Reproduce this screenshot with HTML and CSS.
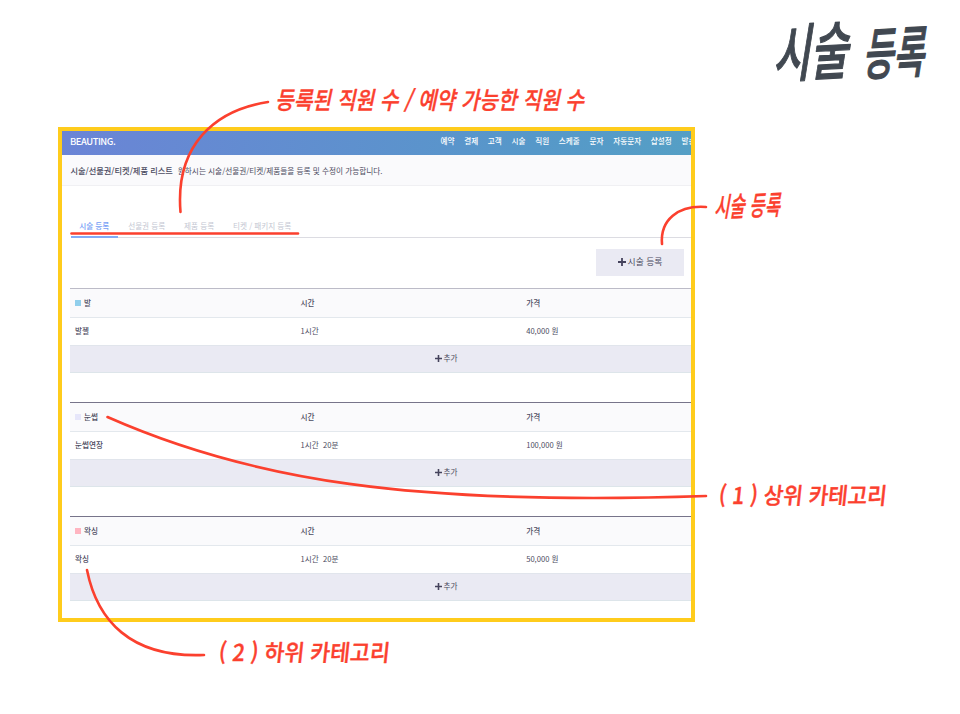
FILE: index.html
```html
<!DOCTYPE html>
<html lang="ko">
<head>
<meta charset="utf-8">
<title>시술 등록</title>
<link rel="stylesheet" href="styles.css">
</head>
<body>
<div class="page">
  <main class="frame">
    <header class="topbar">
      <strong class="brand">BEAUTING.</strong>
      <nav class="nav"><span>예약</span><span>결제</span><span>고객</span><span>시술</span><span>직원</span><span>스케줄</span><span>문자</span><span>자동문자</span><span>샵설정</span><span>발송</span></nav>
    </header>
    <div class="subhead"><h1>시술/선물권/티켓/제품 리스트</h1><p>원하시는 시술/선물권/티켓/제품들을 등록 및 수정이 가능합니다.</p></div>
    <div class="tabs"><span class="tab active">시술 등록</span><span class="tab">선물권 등록</span><span class="tab">제품 등록</span><span class="tab">티켓 / 패키지 등록</span></div>
    <div class="actions"><button class="register"><svg class="plus" viewBox="0 0 8 8"><path d="M4 0v8M0 4h8"/></svg>시술 등록</button></div>

    <section class="group first">
      <div class="row head"><span><i class="swatch blue"></i>발</span><span>시간</span><span>가격</span></div>
      <div class="row"><span class="name">발젤</span><span>1시간</span><span>40,000 원</span></div>
      <div class="add"><svg class="plus" viewBox="0 0 8 8"><path d="M4 0v8M0 4h8"/></svg>추가</div>
    </section>
    <section class="group">
      <div class="row head"><span><i class="swatch lavender"></i>눈썹</span><span>시간</span><span>가격</span></div>
      <div class="row"><span class="name">눈썹연장</span><span>1시간&nbsp; 20분</span><span>100,000 원</span></div>
      <div class="add"><svg class="plus" viewBox="0 0 8 8"><path d="M4 0v8M0 4h8"/></svg>추가</div>
    </section>
    <section class="group">
      <div class="row head"><span><i class="swatch pink"></i>왁싱</span><span>시간</span><span>가격</span></div>
      <div class="row"><span class="name">왁싱</span><span>1시간&nbsp; 20분</span><span>50,000 원</span></div>
      <div class="add"><svg class="plus" viewBox="0 0 8 8"><path d="M4 0v8M0 4h8"/></svg>추가</div>
    </section>
  </main>

  <svg class="notes" viewBox="0 0 960 714">
    <g class="lines">
      <path d="M268 102C215 110 175 145 180.5 212"/>
      <path d="M706 207C678 205 660 220 662 244"/>
      <path d="M107.500 417C250 480 410 506 706 496"/>
      <path d="M87 570C97 620 130 658 204 655"/>
      <path d="M71.500 233.500H298"/>
    </g>
    <g class="title" transform="translate(773 77) rotate(-3) skewX(-12)">
      <text font-size="62" textLength="75" lengthAdjust="spacingAndGlyphs">시술</text>
      <text x="90" y="3" font-size="56" textLength="62" lengthAdjust="spacingAndGlyphs">등록</text>
    </g>
    <g class="hand">
      <text transform="translate(275 109) skewX(-12)" font-size="24" textLength="309" lengthAdjust="spacingAndGlyphs">등록된 직원 수 / 예약 가능한 직원 수</text>
      <text transform="translate(714 217) rotate(-2) skewX(-12)" font-size="27" textLength="66" lengthAdjust="spacingAndGlyphs">시술 등록</text>
      <text transform="translate(718 504) skewX(-6)" font-size="23" textLength="168" lengthAdjust="spacingAndGlyphs">( 1 ) 상위 카테고리</text>
      <text transform="translate(218 661) skewX(-6)" font-size="23" textLength="171" lengthAdjust="spacingAndGlyphs">( 2 ) 하위 카테고리</text>
    </g>
  </svg>
</div>
</body>
</html>
```
FILE: styles.css
```css
* { box-sizing: border-box; }
body { margin: 0; background: #fff; font-family: "Noto Sans CJK KR", "Noto Sans", sans-serif; }
.page { position: relative; width: 960px; height: 714px; padding: 127px 0 0 58px; }
.frame { width: 637px; height: 495px; border: 4px solid #ffcc1c; overflow: hidden; color: #4b4a60; font-size: 7.6px; line-height: 12px; white-space: nowrap; }
.topbar { height: 24px; display: flex; align-items: center; padding: 0 0 4px 8px; color: #fff; background: linear-gradient(100deg, #6b84d6, #5698c9 75%, #559fc5); }
.brand { font-size: 9.4px; font-weight: 500; width: 370.5px; flex: none; letter-spacing: -.45px; }
.nav { display: flex; gap: 9.7px; font-weight: 500; }
.nav span { flex: none; }
.subhead { height: 31px; display: flex; align-items: center; gap: 5px; padding-left: 8.5px; background: #fafafc; border-bottom: 1px solid #f0f0f3; }
.subhead h1 { margin: 0; font-size: 8.2px; font-weight: 500; }
.subhead p { margin: 0; font-size: 7.65px; padding-top: 1px; }
.tabs { height: 21px; margin: 31px 0 0 8.5px; display: flex; gap: 1.5px; border-bottom: 1px solid #dcdce2; color: #c4c7d2; }
.tab { height: 21px; padding: 3px 8.7px 0; }
.tab.active { color: #759ef5; font-weight: 500; border-bottom: 2px solid #82abf7; }
.actions { display: flex; justify-content: flex-end; padding: 11px 7px 0 0; height: 50px; }
.register { width: 88px; height: 27px; display: flex; align-items: center; justify-content: center; gap: 2px; border: 0; background: #eaeaf3; color: #4b4a60; font: 8.8px "Noto Sans CJK KR", sans-serif; padding: 0 0 2px; }
.plus { width: 7px; height: 7px; stroke: #45435c; stroke-width: 1.8; fill: none; }
.register .plus { width: 8px; height: 8px; }
.group { width: 752px; margin: 0 0 29px 8px; border-top: 1px solid #77748a; border-bottom: 1px solid #dde5ea; }
.group.first { border-top-color: #bcbbc7; }
.row { display: grid; grid-template-columns: 225.6px 225.6px 1fr; align-items: center; height: 27px; padding: 0 0 2px 5px; }
.row.head { height: 29px; padding-bottom: 0; background: #fafafc; border-bottom: 1px solid #e3e8ed; font-weight: 500; }
.name { font-weight: 500; }
.swatch { display: inline-block; width: 6px; height: 6px; margin-right: 3px; }
.blue { background: #91cfec; }
.lavender { background: #e6e6fa; }
.pink { background: #ffb5c1; }
.add { height: 27px; padding-bottom: 2px; background: #eaeaf3; border-top: 1px solid #e1e5ec; display: flex; align-items: center; justify-content: center; gap: 2px; }
.notes { position: absolute; left: 0; top: 0; width: 960px; height: 714px; overflow: visible; pointer-events: none; }
.lines { fill: none; stroke: #fb402e; stroke-width: 2.6; stroke-linecap: round; }
.title { fill: #414851; stroke: #414851; stroke-width: 1.2; stroke-linejoin: round; font-weight: 500; }
.hand { fill: #fb402e; stroke: #fb402e; stroke-width: .4; stroke-linejoin: round; font-weight: 500; }
```
